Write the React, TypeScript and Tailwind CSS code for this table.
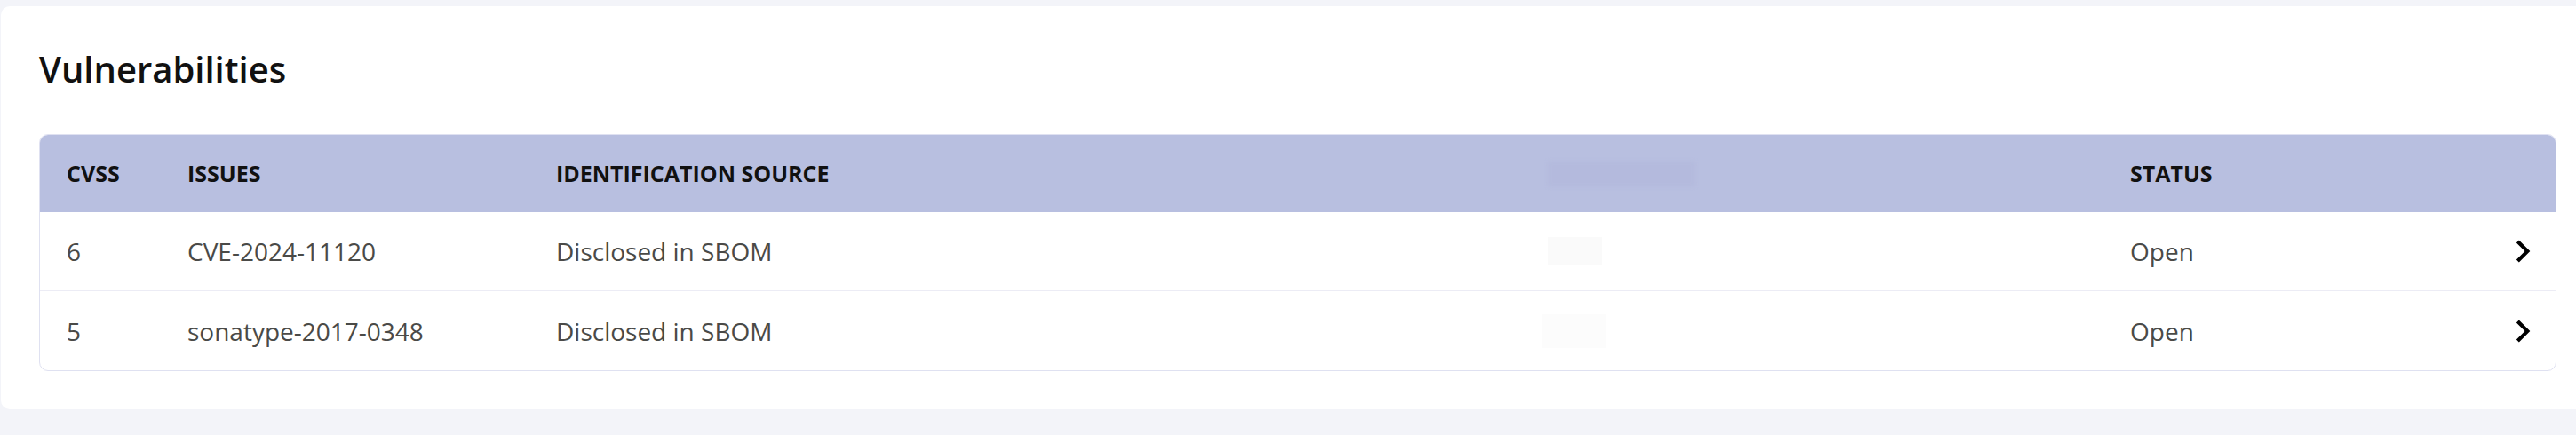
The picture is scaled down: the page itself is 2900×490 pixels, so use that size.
import React from 'react';
import { MdChevronRight } from 'react-icons/md';

interface Vulnerability {
  cvss: number;
  issue: string;
  source: string;
  status: string;
}

const vulnerabilities: Vulnerability[] = [
  { cvss: 6, issue: 'CVE-2024-11120', source: 'Disclosed in SBOM', status: 'Open' },
  { cvss: 5, issue: 'sonatype-2017-0348', source: 'Disclosed in SBOM', status: 'Open' },
];

const cols = 'grid grid-cols-[136px_415px_1117px_655px_1fr] items-center pl-[30px]';

export default function App() {
  return (
    <div
      className="min-h-screen w-full overflow-hidden bg-[#f3f4f9] pt-[7px]"
      style={{ fontFamily: '"Open Sans", "Noto Sans", sans-serif' }}
    >
      <div className="ml-px w-[2920px] rounded-[10px] bg-white pl-[43px] pr-[43px] pt-[44px] pb-[43px]">
        <h2 className="text-[40px] leading-[54px] font-semibold text-[#111111]">Vulnerabilities</h2>

        <div className="mt-[46px] rounded-[10px] border border-[#dfe1f1] overflow-hidden">
          {/* Header */}
          <div className={`${cols} h-[87px] bg-[#b8bfe0] text-[25px] font-bold text-[#111111]`}>
            <span>CVSS</span>
            <span>ISSUES</span>
            <span>IDENTIFICATION SOURCE</span>
            <div className="h-[28px] w-[165px] bg-[#b4badd] blur-[2px]" />
            <span>STATUS</span>
          </div>

          {/* Rows */}
          {vulnerabilities.map((v, i) => (
            <div
              key={v.issue}
              className={`${cols} h-[89px] text-[28px] text-[#4a4a47] ${
                i < vulnerabilities.length - 1 ? 'border-b border-[#ececf5]' : ''
              }`}
            >
              <span>{v.cvss}</span>
              <span>{v.issue}</span>
              <span>{v.source}</span>
              {i === 0 ? (
                <div className="h-[32px] w-[61px] bg-[#fafafa]" />
              ) : (
                <div className="-ml-[7px] h-[38px] w-[72px] bg-[#fcfcfc]" />
              )}
              <div className="flex items-center justify-between pr-3">
                <span>{v.status}</span>
                <MdChevronRight size={50} className="text-black" />
              </div>
            </div>
          ))}
        </div>
      </div>
    </div>
  );
}
